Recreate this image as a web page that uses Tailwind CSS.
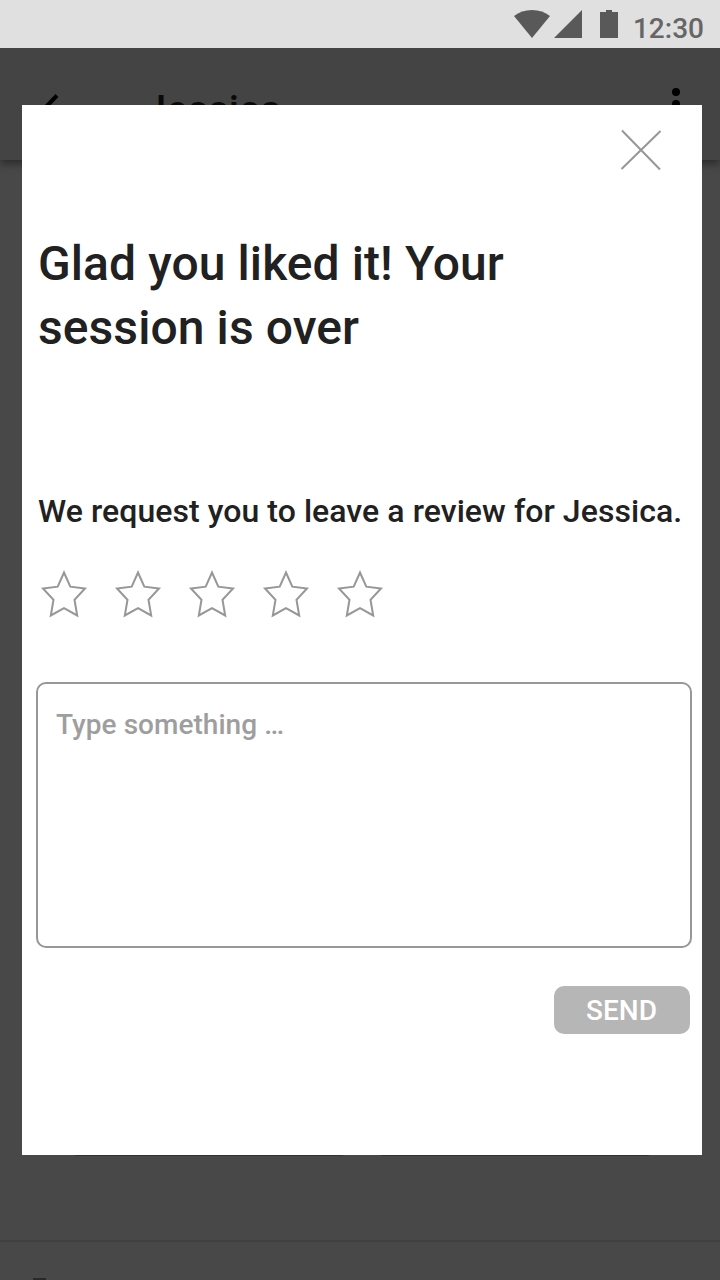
<!DOCTYPE html>
<html lang="en">
<head>
<meta charset="utf-8">
<title>Session review</title>
<script src="https://cdn.jsdelivr.net/npm/@tailwindcss/browser@4"></script>
</head>
<body class="font-['Roboto',sans-serif] font-medium antialiased">
<div class="relative w-[720px] h-[1280px] overflow-hidden bg-[#484848] flex flex-col">
  <!-- Status bar -->
  <header class="relative z-10 h-12 shrink-0 bg-[#e0e0e0] flex justify-end pr-4">
    <svg class="w-[110px] h-12 mr-[9px]" viewBox="510 0 110 48" fill="#595959">
      <path d="M514 16Q521.500 10 532 10T550 16L532 38Z"/>
      <path d="M582 10V38H554Z"/>
      <path d="M606 10H612V12H618V38H600V12H606Z"/>
    </svg>
    <span class="w-[75px] text-right whitespace-nowrap text-[28px] leading-[58px] text-[#666666]">12:30</span>
  </header>
  <!-- App bar -->
  <div class="h-28 shrink-0 bg-[#444444] shadow-[0_4px_8px_rgba(0,0,0,0.4)] flex items-center pl-8 pr-7 text-black">
    <svg class="size-12" viewBox="0 0 48 48" fill="none" stroke="currentColor" stroke-width="4"><path d="M25 15.500L10 31L25 46M10 31H42"/></svg>
    <span class="ml-16 grow text-[40px] leading-[48px] pt-3.5 text-[#0a0a0a]">Jessica</span>
    <svg class="w-8 h-12" viewBox="0 0 32 48" fill="currentColor"><circle cx="16" cy="12" r="4"/><circle cx="16" cy="24" r="4"/><circle cx="16" cy="36" r="4"/></svg>
  </div>
  <!-- Page behind the dialog -->
  <main class="h-[1080px] shrink-0 flex items-end justify-center gap-[34px] pl-1 pb-[84px]">
    <div class="w-[272px] h-12 rounded bg-[#303333]"></div>
    <div class="w-[272px] h-12 rounded bg-[#303333]"></div>
  </main>
  <footer class="h-10 shrink-0 border-t-2 border-[#404040] pt-9 pl-[33px]"><div class="w-[13px] h-1 bg-[#292929]"></div></footer>

  <!-- Review dialog -->
  <section class="absolute z-20 left-[22px] top-[105px] w-[680px] h-[1050px] bg-white pl-3.5 pr-2.5 flex flex-col text-[#212121]">
    <button class="self-end mt-6 mr-[30px] size-[42px]" aria-label="Close">
      <svg class="size-[42px]" viewBox="0 0 42 42" fill="none" stroke="#979797" stroke-width="2"><path d="M2 1.500L40 40.500M40.500 2L1.500 40"/></svg>
    </button>
    <h1 class="mt-[61px] ml-0.5 text-[48px] leading-[64px] tracking-[0.08px]">Glad you liked it! Your<br>session is over</h1>
    <p class="mt-[127px] ml-0.5 text-[32px] leading-[48px] tracking-[0.06px] whitespace-nowrap">We request you to leave a review for Jessica.</p>
    <div class="mt-[35px] ml-1 flex gap-[26px]">
      <svg class="w-12 h-12" viewBox="0 0 48 48" fill="none" stroke="#979797" stroke-width="2"><path d="M24 2.500L30.300 16.700L45 18.500L34.500 29.700L37.200 45.500L24 38.200L10.800 45.500L13.500 29.700L3 18.500L17.700 16.700Z"/></svg>
      <svg class="w-12 h-12" viewBox="0 0 48 48" fill="none" stroke="#979797" stroke-width="2"><path d="M24 2.500L30.300 16.700L45 18.500L34.500 29.700L37.200 45.500L24 38.200L10.800 45.500L13.500 29.700L3 18.500L17.700 16.700Z"/></svg>
      <svg class="w-12 h-12" viewBox="0 0 48 48" fill="none" stroke="#979797" stroke-width="2"><path d="M24 2.500L30.300 16.700L45 18.500L34.500 29.700L37.200 45.500L24 38.200L10.800 45.500L13.500 29.700L3 18.500L17.700 16.700Z"/></svg>
      <svg class="w-12 h-12" viewBox="0 0 48 48" fill="none" stroke="#979797" stroke-width="2"><path d="M24 2.500L30.300 16.700L45 18.500L34.500 29.700L37.200 45.500L24 38.200L10.800 45.500L13.500 29.700L3 18.500L17.700 16.700Z"/></svg>
      <svg class="w-12 h-12" viewBox="0 0 48 48" fill="none" stroke="#979797" stroke-width="2"><path d="M24 2.500L30.300 16.700L45 18.500L34.500 29.700L37.200 45.500L24 38.200L10.800 45.500L13.500 29.700L3 18.500L17.700 16.700Z"/></svg>
    </div>
    <div class="mt-[64px] w-[656px] h-[266px] border-2 border-[#979797] rounded-[10px] px-[18px] pt-[21px] text-[28px] leading-[40px] tracking-[0.04px] text-[#9e9e9e]">Type something …</div>
    <button class="mt-[38px] mr-0.5 self-end w-[136px] h-12 rounded-[10px] bg-[#b6b6b6] text-white text-[28px] leading-[50px] pr-px">SEND</button>
  </section>
</div>
</body>
</html>
